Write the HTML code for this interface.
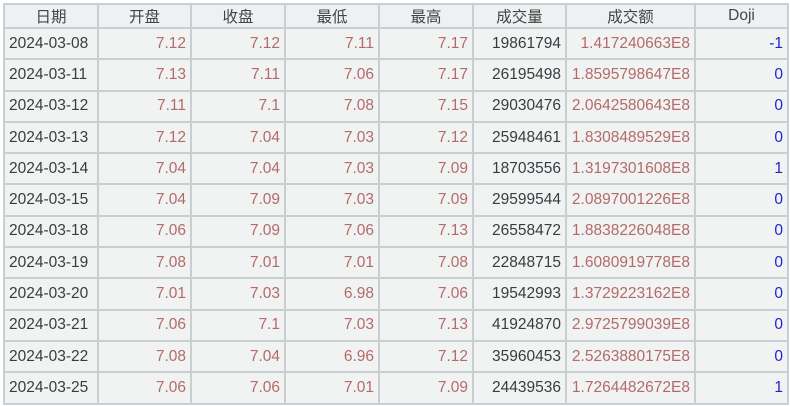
<!DOCTYPE html>
<html><head><style>
body{margin:0;background:#fff;width:790px;height:406px;overflow:hidden;}
table{position:absolute;left:3px;top:3px;border-collapse:collapse;font-family:"Liberation Sans","Noto Sans CJK SC",sans-serif;font-size:15.5px;table-layout:fixed;}
td,th{border:2px solid #c9ced2;padding:0 4px;height:29.3px;background:#f1f3f3;color:#383c40;white-space:nowrap;}
th{font-weight:normal;text-align:center;height:22px;background:#eef0f1;color:#444;}
td{text-align:right;}
td.d{text-align:left;}
.r{color:#b36a6a;}
.b{color:#2222cc;}
</style></head><body>
<table>
<colgroup><col style="width:94px"><col style="width:93px"><col style="width:94px"><col style="width:94px"><col style="width:94px"><col style="width:93px"><col style="width:129px"><col style="width:93px"></colgroup>
<tr><th>日期</th><th>开盘</th><th>收盘</th><th>最低</th><th>最高</th><th>成交量</th><th>成交额</th><th>Doji</th></tr>
<tr><td class="d">2024-03-08</td><td class="r">7.12</td><td class="r">7.12</td><td class="r">7.11</td><td class="r">7.17</td><td>19861794</td><td class="r">1.417240663E8</td><td class="b">-1</td></tr>
<tr><td class="d">2024-03-11</td><td class="r">7.13</td><td class="r">7.11</td><td class="r">7.06</td><td class="r">7.17</td><td>26195498</td><td class="r">1.8595798647E8</td><td class="b">0</td></tr>
<tr><td class="d">2024-03-12</td><td class="r">7.11</td><td class="r">7.1</td><td class="r">7.08</td><td class="r">7.15</td><td>29030476</td><td class="r">2.0642580643E8</td><td class="b">0</td></tr>
<tr><td class="d">2024-03-13</td><td class="r">7.12</td><td class="r">7.04</td><td class="r">7.03</td><td class="r">7.12</td><td>25948461</td><td class="r">1.8308489529E8</td><td class="b">0</td></tr>
<tr><td class="d">2024-03-14</td><td class="r">7.04</td><td class="r">7.04</td><td class="r">7.03</td><td class="r">7.09</td><td>18703556</td><td class="r">1.3197301608E8</td><td class="b">1</td></tr>
<tr><td class="d">2024-03-15</td><td class="r">7.04</td><td class="r">7.09</td><td class="r">7.03</td><td class="r">7.09</td><td>29599544</td><td class="r">2.0897001226E8</td><td class="b">0</td></tr>
<tr><td class="d">2024-03-18</td><td class="r">7.06</td><td class="r">7.09</td><td class="r">7.06</td><td class="r">7.13</td><td>26558472</td><td class="r">1.8838226048E8</td><td class="b">0</td></tr>
<tr><td class="d">2024-03-19</td><td class="r">7.08</td><td class="r">7.01</td><td class="r">7.01</td><td class="r">7.08</td><td>22848715</td><td class="r">1.6080919778E8</td><td class="b">0</td></tr>
<tr><td class="d">2024-03-20</td><td class="r">7.01</td><td class="r">7.03</td><td class="r">6.98</td><td class="r">7.06</td><td>19542993</td><td class="r">1.3729223162E8</td><td class="b">0</td></tr>
<tr><td class="d">2024-03-21</td><td class="r">7.06</td><td class="r">7.1</td><td class="r">7.03</td><td class="r">7.13</td><td>41924870</td><td class="r">2.9725799039E8</td><td class="b">0</td></tr>
<tr><td class="d">2024-03-22</td><td class="r">7.08</td><td class="r">7.04</td><td class="r">6.96</td><td class="r">7.12</td><td>35960453</td><td class="r">2.5263880175E8</td><td class="b">0</td></tr>
<tr><td class="d">2024-03-25</td><td class="r">7.06</td><td class="r">7.06</td><td class="r">7.01</td><td class="r">7.09</td><td>24439536</td><td class="r">1.7264482672E8</td><td class="b">1</td></tr>
</table>
</body></html>
